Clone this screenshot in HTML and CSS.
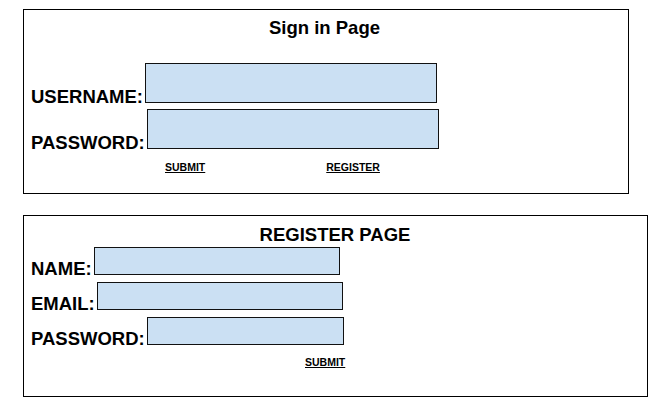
FILE: index.html
```html
<!DOCTYPE html>
<html>
<head>
<meta charset="utf-8">
<title>Sign in</title>
<link rel="stylesheet" href="styles.css">
</head>
<body>
<div class="page">
  <form class="card card-signin">
    <h1 class="title">Sign in Page</h1>
    <div class="rows rows-signin">
      <div class="row">
        <label class="label" for="u">USERNAME:</label>
        <input class="field field-lg" id="u" type="text">
      </div>
      <div class="row">
        <label class="label" for="p">PASSWORD:</label>
        <input class="field field-lg" id="p" type="password">
      </div>
    </div>
    <div class="links links-signin">
      <a class="link" href="#">SUBMIT</a>
      <a class="link" href="#">REGISTER</a>
    </div>
  </form>

  <form class="card card-register">
    <h1 class="title title-register">REGISTER PAGE</h1>
    <div class="rows rows-register">
      <div class="row">
        <label class="label" for="n">NAME:</label>
        <input class="field field-sm" id="n" type="text">
      </div>
      <div class="row">
        <label class="label" for="e">EMAIL:</label>
        <input class="field field-sm" id="e" type="text">
      </div>
      <div class="row">
        <label class="label" for="rp">PASSWORD:</label>
        <input class="field field-sm field-pw" id="rp" type="password">
      </div>
    </div>
    <div class="links links-register">
      <a class="link" href="#">SUBMIT</a>
    </div>
  </form>
</div>
</body>
</html>
```
FILE: styles.css
```css
* { box-sizing: border-box; }
html, body { margin: 0; padding: 0; background: #fff; }
body { font-family: "Liberation Sans", Arial, sans-serif; color: #000; }

.page {
  padding: 9px 0 0 23px;
  display: flex;
  flex-direction: column;
  gap: 21px;
}

.card {
  border: 1px solid #000;
  margin: 0;
  padding: 0 0 0 7px;
  display: flex;
  flex-direction: column;
}
.card-signin { width: 606px; height: 185px; padding-top: 7px; }
.card-register { width: 625px; height: 182px; padding-top: 8px; }

.title {
  margin: 0 3px 0 -7px;
  font-size: 18.5px;
  font-weight: bold;
  text-align: center;
  line-height: normal;
}
.title-register { margin-right: 1px; }

.rows { display: flex; flex-direction: column; }
.rows-signin { margin-top: 24px; gap: 6px; }
.rows-register { margin-top: 1px; gap: 7px; }

.row {
  display: flex;
  align-items: flex-end;
  gap: 2px;
}

.label {
  font-size: 18.5px;
  font-weight: bold;
  line-height: 13px;
}

.field {
  margin: 0;
  padding: 0;
  border: 1px solid #111;
  background: #cbe0f3;
  border-radius: 0;
  outline: none;
  font: inherit;
}
.field-lg { width: 292px; height: 40px; }
.field-sm { width: 246px; height: 28px; }
.field-pw { width: 197px; }

.links { display: flex; }
.links-signin { margin-top: 12px; padding-left: 134px; gap: 121px; }
.links-register { margin-top: 11px; padding-left: 274px; }

.link {
  font-size: 10.5px;
  font-weight: bold;
  color: #000;
  text-decoration: underline;
  line-height: normal;
}
```
